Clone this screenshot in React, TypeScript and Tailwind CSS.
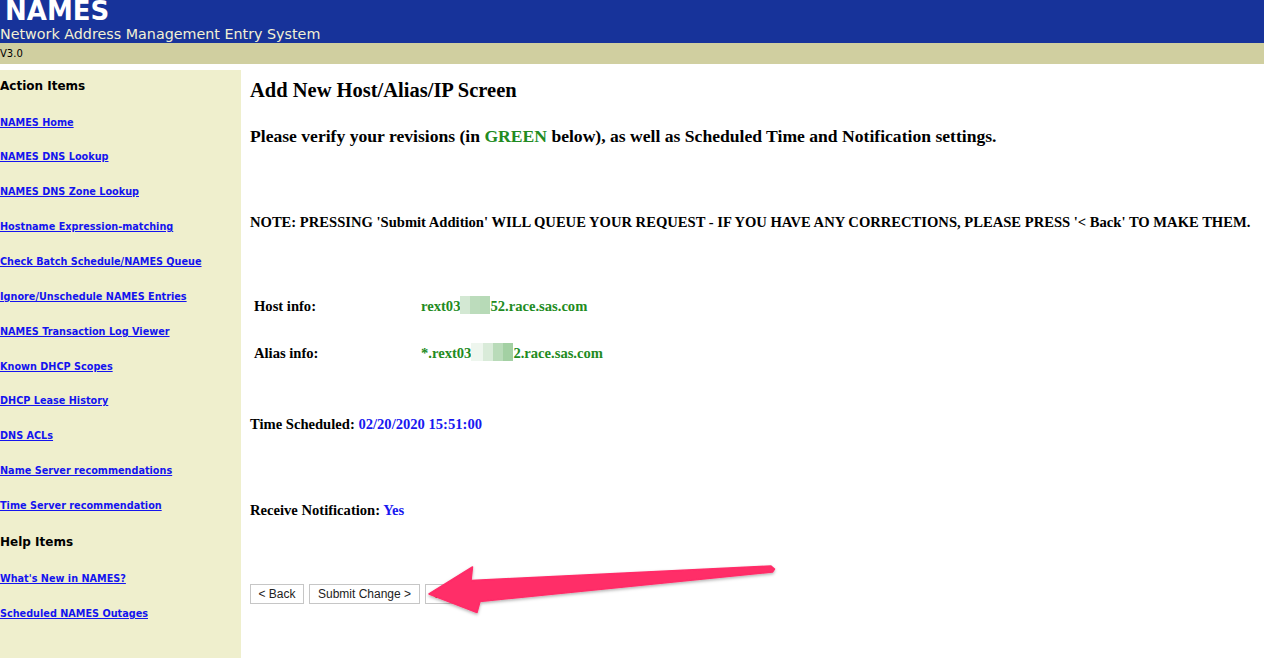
import React from "react";

const actionLinks = [
  "NAMES Home",
  "NAMES DNS Lookup",
  "NAMES DNS Zone Lookup",
  "Hostname Expression-matching",
  "Check Batch Schedule/NAMES Queue",
  "Ignore/Unschedule NAMES Entries",
  "NAMES Transaction Log Viewer",
  "Known DHCP Scopes",
  "DHCP Lease History",
  "DNS ACLs",
  "Name Server recommendations",
  "Time Server recommendation",
];

const helpLinks = ["What's New in NAMES?", "Scheduled NAMES Outages"];

const verdana = "font-['DejaVu_Sans',Verdana,sans-serif]";
const serif = "font-['Liberation_Serif','Times_New_Roman',serif]";

const SideLink = ({ label }: { label: string }) => (
  <div className="h-[34.85px] flex items-center">
    <a href="#" className="text-[9.7px] font-bold text-[#1414ee] underline underline-offset-[1px]">
      {label}
    </a>
  </div>
);

// pixelated redaction block
const Mosaic = ({ cells, lead = 0 }: { cells: string[]; lead?: number }) => (
  <span className="inline-flex align-middle h-[18px] -mt-[3px]">
    {lead > 0 && <span className="h-full" style={{ width: lead, background: "#eef6ee" }} />}
    {cells.map((c, i) => (
      <span key={i} className="w-[10px] h-full" style={{ background: c }} />
    ))}
  </span>
);

export default function App() {
  return (
    <div className="relative w-[1264px] h-[658px] overflow-hidden bg-white">
      {/* Header */}
      <div className={`h-[43px] bg-[#17339a] ${verdana} overflow-hidden`}>
        <div className="text-[26px] font-bold text-white leading-none pl-[5px] -mt-[2px] h-[25px]">NAMES</div>
        <div className="text-[14.3px] text-[#f2f0d4] leading-none mt-[4px]">Network Address Management Entry System</div>
      </div>
      <div className={`h-[21px] bg-[#d0cfa0] flex items-center text-[10px] text-black ${verdana}`}>V3.0</div>

      <div className="flex mt-[6px]">
        {/* Sidebar */}
        <div className={`w-[241px] h-[588px] bg-[#efefcd] ${verdana}`}>
          <div className="h-[32px] flex items-center text-[12px] font-bold text-black">Action Items</div>
          <div className="mt-[3.5px]">
            {actionLinks.map((l) => (
              <SideLink key={l} label={l} />
            ))}
          </div>
          <div className="h-[36px] flex items-center text-[12px] font-bold text-black">Help Items</div>
          <div className="mt-[2px]">
            {helpLinks.map((l) => (
              <SideLink key={l} label={l} />
            ))}
          </div>
        </div>

        {/* Main */}
        <div className={`flex-1 pl-[9px] text-black ${serif}`}>
          <div className="mt-[8px] text-[20.5px] font-bold leading-[24px]">Add New Host/Alias/IP Screen</div>
          <div className="mt-[23px] text-[17.6px] font-bold leading-[22px] whitespace-nowrap">
            Please verify your revisions (in <span className="text-[#228b22]">GREEN</span> below), as well as Scheduled Time and Notification settings.
          </div>
          <div className="mt-[66px] text-[14.6px] font-bold leading-[18px] whitespace-nowrap">
            NOTE: PRESSING 'Submit Addition' WILL QUEUE YOUR REQUEST - IF YOU HAVE ANY CORRECTIONS, PLEASE PRESS '&lt; Back' TO MAKE THEM.
          </div>

          <div className="mt-[52px] text-[14.6px] font-bold pl-[4px]">
            <div className="h-[47px] flex items-center">
              <div className="w-[167px]">Host info:</div>
              <div className="text-[#228b22] flex items-center">
                rext03
                <Mosaic cells={["#d3e8d3", "#bcdcbc", "#b7dab7"]} />
                52.race.sas.com
              </div>
            </div>
            <div className="h-[47px] flex items-center">
              <div className="w-[167px]">Alias info:</div>
              <div className="text-[#228b22] flex items-center">
                *.rext03
                <Mosaic lead={12} cells={["#d9ebd9", "#b9dbb9", "#a3d0a3"]} />
                2.race.sas.com
              </div>
            </div>
          </div>

          <div className="mt-[38px] text-[14.6px] font-bold leading-[18px]">
            Time Scheduled: <span className="text-[#1818f0]">02/20/2020 15:51:00</span>
          </div>
          <div className="mt-[68px] text-[14.6px] font-bold leading-[18px]">
            Receive Notification: <span className="text-[#1818f0]">Yes</span>
          </div>

          <div className="mt-[65px] flex gap-[5px] font-['Liberation_Sans',Arial,sans-serif] text-[12px]">
            <button className="h-[20px] w-[54px] border border-[#c6c6c6] bg-white text-[#222]">&lt; Back</button>
            <button className="h-[20px] w-[111px] border border-[#c6c6c6] bg-white text-[#222]">Submit Change &gt;</button>
            <button className="h-[20px] w-[54px] border border-[#c6c6c6] bg-white text-[#222]">Cancel</button>
          </div>
        </div>
      </div>

      {/* Annotation arrow */}
      <svg className="absolute left-0 top-0 pointer-events-none" width="1264" height="658">
        <defs>
          <filter id="sh" x="-10%" y="-50%" width="120%" height="200%">
            <feDropShadow dx="0" dy="1.5" stdDeviation="1.5" floodColor="#000" floodOpacity="0.3" />
          </filter>
        </defs>
        <polygon
          points="429,594 472.5,567 471,580.5 771,566 774.5,569 772.5,572 480,601.5 477,612.5"
          fill="#ff2d68"
          stroke="#ff2d68"
          strokeWidth="1.5"
          strokeLinejoin="round"
          filter="url(#sh)"
        />
      </svg>
    </div>
  );
}
